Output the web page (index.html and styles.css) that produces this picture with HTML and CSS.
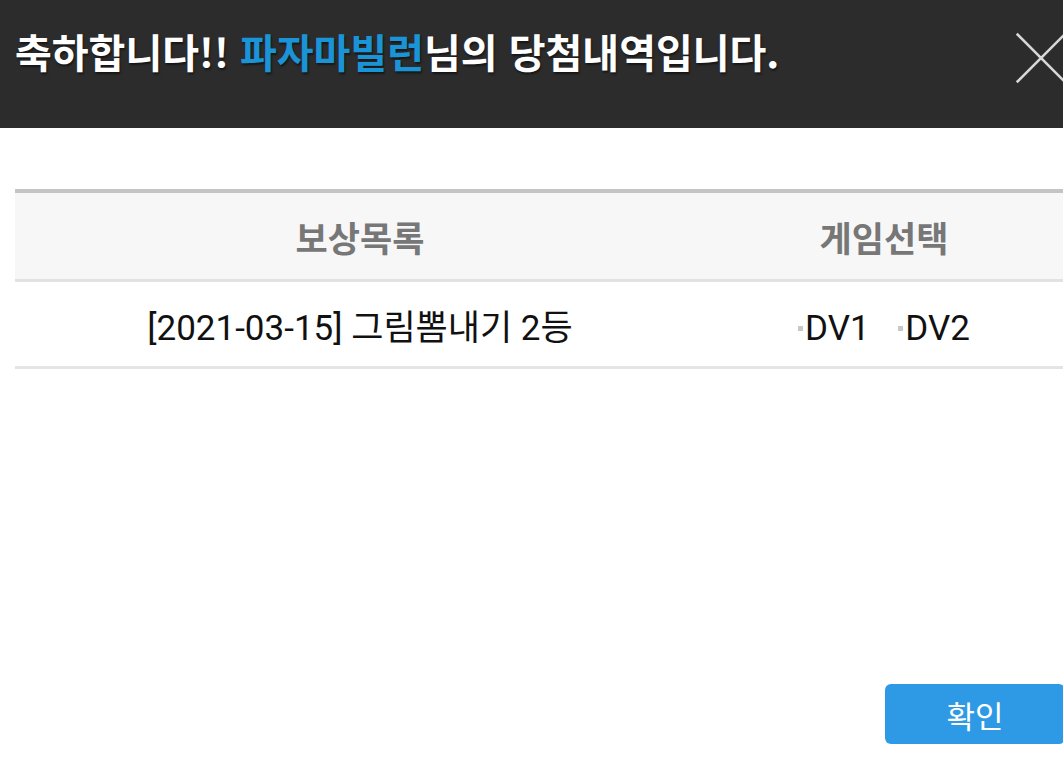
FILE: index.html
```html
<!DOCTYPE html>
<html lang="ko">
<head>
    <meta charset="UTF-8">
    <meta name="viewport" content="width=device-width, initial-scale=1.0">
    <title>당첨내역</title>
    <link rel="stylesheet" href="styles.css">
</head>
<body>

    <!-- Popup Header -->
    <div class="popup-header">
        <h1 class="popup-title">축하합니다!! <span class="nickname">파자마빌런</span>님의 당첨내역입니다.</h1>
        <button class="close-btn" aria-label="닫기">
            <svg width="60" height="60" viewBox="0 0 60 60">
                <path d="M2 2 L58 58 M58 2 L2 58" stroke="#d8d8d8" stroke-width="3" fill="none"/>
            </svg>
        </button>
    </div>

    <!-- Reward List -->
    <div class="popup-body">
        <table class="reward-table">
            <thead>
                <tr>
                    <th class="col-reward">보상목록</th>
                    <th class="col-game">게임선택</th>
                </tr>
            </thead>
            <tbody>
                <tr>
                    <td class="col-reward">[2021-03-15] 그림뽐내기 2등</td>
                    <td class="col-game">
                        <span class="game-option">DV1</span>
                        <span class="game-option">DV2</span>
                    </td>
                </tr>
            </tbody>
        </table>
    </div>

    <div class="popup-footer">
        <button class="confirm-btn">확인</button>
    </div>

</body>
</html>
```

FILE: styles.css
```css
html, body {
    margin: 0;
    padding: 0;
}
body {
    width: 1063px;
    height: 761px;
    overflow: hidden;
    background-color: #fff;
    font-family: Roboto, "Noto Sans CJK KR", sans-serif;
}
.popup-header {
    display: flex;
    align-items: center;
    justify-content: space-between;
    height: 128px;
    padding-left: 15px;
    background-color: #2c2c2c;
    box-sizing: border-box;
}
.popup-title {
    margin: 0 0 26px 0;
    font-family: "Noto Sans CJK KR", sans-serif;
    font-size: 40px;
    font-weight: bold;
    color: #fff;
    text-shadow: 1px 2px 2px rgba(0, 0, 0, 0.5);
}
.nickname {
    color: #1a94d6;
}
.close-btn {
    display: flex;
    align-items: center;
    width: 48px;
    height: 60px;
    margin: 0 0 12px 0;
    padding: 0;
    border: none;
    background: none;
    overflow: hidden;
    cursor: pointer;
}
.close-btn svg {
    flex-shrink: 0;
    width: 52px;
    height: 52px;
}
.popup-body {
    padding: 61px 0 0 15px;
    height: 495px;
    box-sizing: border-box;
}
.reward-table {
    width: 1048px;
    border-collapse: collapse;
    border-top: 4px solid #c4c4c4;
}
.reward-table th, .reward-table td {
    padding: 0;
    text-align: center;
}
.reward-table th {
    height: 86px;
    background-color: #f7f7f7;
    border-bottom: 3px solid #e2e2e2;
    font-family: "Noto Sans CJK KR", sans-serif;
    font-size: 35px;
    font-weight: bold;
    color: #777;
}
.reward-table td {
    height: 84px;
    border-bottom: 3px solid #e4e4e4;
    font-size: 35px;
    color: #111;
}
.col-reward {
    width: 690px;
}
.col-game {
    width: 358px;
}
.game-option {
    display: inline-flex;
    align-items: center;
    margin: 0 10px;
}
.game-option::before {
    content: "";
    width: 5px;
    height: 5px;
    margin-right: 2px;
    background-color: #c8c8c8;
}
.popup-footer {
    display: flex;
    justify-content: flex-end;
    padding-top: 61px;
    margin-right: -2px;
}
.confirm-btn {
    width: 180px;
    height: 60px;
    border: none;
    border-radius: 6px;
    background-color: #2e9ae6;
    color: #fff;
    font-family: "Noto Sans CJK KR", sans-serif;
    font-size: 31px;
    cursor: pointer;
}
```
